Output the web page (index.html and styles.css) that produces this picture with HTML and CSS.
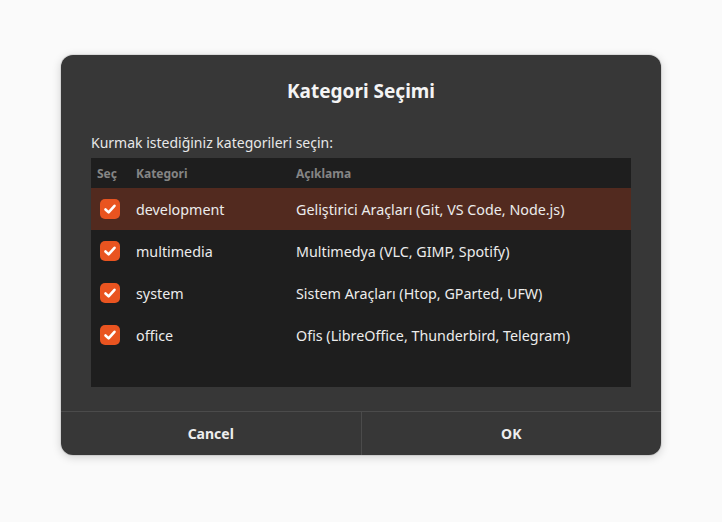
FILE: index.html
```html
<!DOCTYPE html>
<html lang="tr">
<head>
<meta charset="utf-8">
<title>Kategori Seçimi</title>
<link rel="stylesheet" href="styles.css">
</head>
<body>
<div class="dialog">
  <div class="title">Kategori Seçimi</div>
  <div class="content">
    <div class="label">Kurmak istediğiniz kategorileri seçin:</div>
    <div class="table">
      <div class="row head">
        <div class="c-sel">Seç</div>
        <div class="c-cat">Kategori</div>
        <div class="c-desc">Açıklama</div>
      </div>
      <div class="row selected">
        <div class="c-sel"><span class="check"><svg viewBox="0 0 20 20" width="20" height="20"><path d="M5.5 10.5 L8.6 13.4 L14.5 6.8" fill="none" stroke="#fff" stroke-width="2.6" stroke-linecap="round" stroke-linejoin="round"/></svg></span></div>
        <div class="c-cat">development</div>
        <div class="c-desc">Geliştirici Araçları (Git, VS Code, Node.js)</div>
      </div>
      <div class="row">
        <div class="c-sel"><span class="check"><svg viewBox="0 0 20 20" width="20" height="20"><path d="M5.5 10.5 L8.6 13.4 L14.5 6.8" fill="none" stroke="#fff" stroke-width="2.6" stroke-linecap="round" stroke-linejoin="round"/></svg></span></div>
        <div class="c-cat">multimedia</div>
        <div class="c-desc">Multimedya (VLC, GIMP, Spotify)</div>
      </div>
      <div class="row">
        <div class="c-sel"><span class="check"><svg viewBox="0 0 20 20" width="20" height="20"><path d="M5.5 10.5 L8.6 13.4 L14.5 6.8" fill="none" stroke="#fff" stroke-width="2.6" stroke-linecap="round" stroke-linejoin="round"/></svg></span></div>
        <div class="c-cat">system</div>
        <div class="c-desc">Sistem Araçları (Htop, GParted, UFW)</div>
      </div>
      <div class="row">
        <div class="c-sel"><span class="check"><svg viewBox="0 0 20 20" width="20" height="20"><path d="M5.5 10.5 L8.6 13.4 L14.5 6.8" fill="none" stroke="#fff" stroke-width="2.6" stroke-linecap="round" stroke-linejoin="round"/></svg></span></div>
        <div class="c-cat">office</div>
        <div class="c-desc">Ofis (LibreOffice, Thunderbird, Telegram)</div>
      </div>
    </div>
  </div>
  <div class="buttons">
    <div class="btn">Cancel</div>
    <div class="btn">OK</div>
  </div>
</div>
</body>
</html>
```
FILE: styles.css
```css
html, body {
  margin: 0;
  padding: 0;
  background: #fafafa;
}
body {
  padding: 55px 61px;
  font-family: "Noto Sans", "DejaVu Sans", sans-serif;
  color: #f2f2f2;
}
.dialog {
  width: 600px;
  height: 400px;
  background: #373737;
  border-radius: 12px;
  box-shadow: 0 2px 10px rgba(0,0,0,0.18), 0 0 0 1px rgba(0,0,0,0.08);
  display: flex;
  flex-direction: column;
  overflow: hidden;
}
.title {
  padding-top: 23px;
  height: 26px;
  line-height: 26px;
  text-align: center;
  font-weight: 700;
  font-size: 19px;
  color: #f4f4f4;
}
.content {
  padding: 29px 30px 0;
  flex: 1;
}
.label {
  height: 20px;
  line-height: 20px;
  font-size: 14px;
  color: #e8e8e8;
  margin-bottom: 5px;
}
.table {
  background: #1e1e1e;
  height: 229px;
}
.row {
  display: flex;
  align-items: center;
  height: 42px;
  font-size: 14.3px;
  color: #ececec;
}
.row.head {
  height: 30px;
  font-size: 12px;
  font-weight: 700;
  color: #858585;
}
.row.selected {
  background: #522a1f;
}
.c-sel {
  width: 45px;
  padding-left: 6px;
  box-sizing: border-box;
  display: flex;
  align-items: center;
}
.row:not(.head) .c-sel {
  padding-left: 9px;
}
.c-cat {
  width: 160px;
}
.c-desc {
  flex: 1;
}
.check {
  width: 20px;
  height: 20px;
  border-radius: 5px;
  background: #e95420;
  display: block;
}
.check svg {
  display: block;
}
.buttons {
  display: flex;
  height: 43px;
  border-top: 1px solid #4b4b4b;
}
.btn {
  flex: 1;
  display: flex;
  align-items: center;
  justify-content: center;
  padding-bottom: 1px;
  font-size: 14px;
  font-weight: 700;
  color: #eeeeee;
}
.btn + .btn {
  border-left: 1px solid #4b4b4b;
}
```
